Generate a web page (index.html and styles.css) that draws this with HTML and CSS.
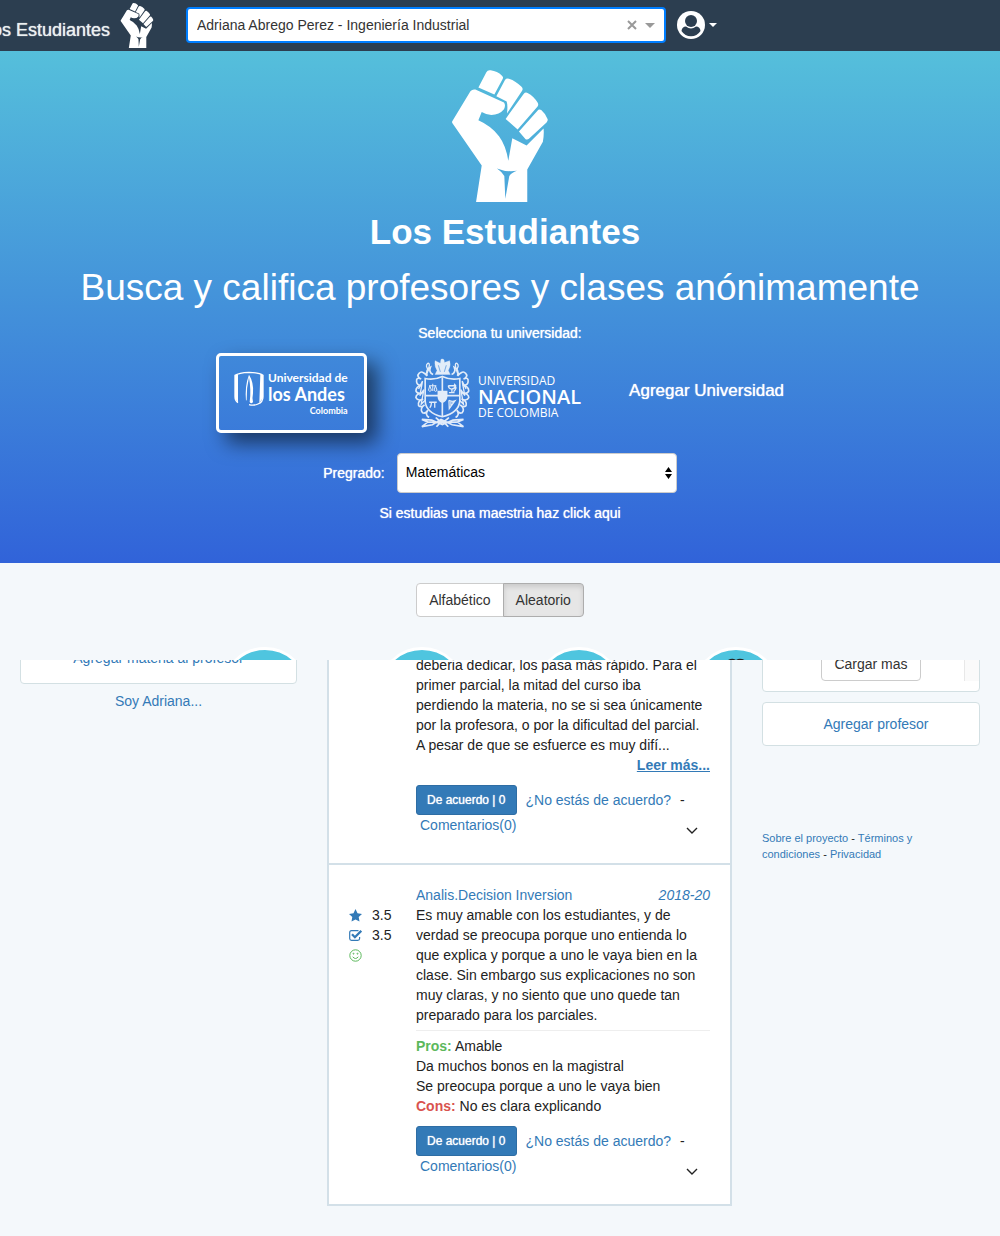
FILE: index.html
```html
<!DOCTYPE html>
<html lang="es">
<head>
<meta charset="utf-8">
<meta name="viewport" content="width=device-width, initial-scale=1">
<title>Los Estudiantes</title>
<link rel="stylesheet" href="styles.css">
</head>
<body>
<svg class="defs" aria-hidden="true">
  <symbol id="fist" viewBox="66 29 288 397">
    <path d="M145 82L169 36Q173 28 182 30Q202 33 216 46Q221 50 218 56L193 103Z"/>
    <path d="M199 108L225 59Q229 53 237 55Q258 62 274 79Q281 85 276 92L231 160Q234 135 230 124Z"/>
    <path d="M227 176L281 101Q286 95 293 98Q312 108 323 127Q327 133 323 139L263 208Z"/>
    <path d="M267 214L322 152Q327 145 334 149Q348 161 353 176Q355 181 350 187L297 236Q292 240 287 237Z"/>
    <path fill-rule="evenodd" d="M66 184L121 93Q127 86 136 88L222 127Q228 135 222 147Q208 164 184 164Q168 163 155 155L145 180Q185 198 207 228Q228 256 235 302L247 234L290 256L341 205Q343 222 339 245L292 328V426H138L155 316L66 188ZM201 325Q230 337 261 332Q245 337 238 348L226 416L223 348Q216 335 201 325Z"/>
  </symbol>
  <symbol id="chevron" viewBox="0 0 12 8"><path d="M1 1L6 6L11 1" fill="none" stroke="#222" stroke-width="1.4"/></symbol>
</svg>

<header class="topbar">
  <a class="brand" href="#"><span>Los Estudiantes</span><svg class="brand-fist"><use href="#fist"/></svg></a>
  <div class="search">
    <input class="search-input" type="text" aria-label="Buscar profesor" value="Adriana Abrego Perez - Ingeniería Industrial">
    <button class="search-btn" type="button" aria-label="Borrar"><svg width="10" height="10" viewBox="0 0 10 10"><path d="M1 1L9 9M9 1L1 9" stroke="#999" stroke-width="2"/></svg></button>
    <button class="search-btn" type="button" aria-label="Abrir"><svg width="10" height="5" viewBox="0 0 10 5"><path d="M0 0H10L5 5Z" fill="#999"/></svg></button>
  </div>
  <button class="user" type="button" aria-label="Usuario">
    <svg width="28" height="28" viewBox="0 0 28 28"><circle cx="14" cy="14" r="14" fill="#fff"/><circle cx="14" cy="10" r="6" fill="#2c3e50"/><path d="M4.500 20Q5 15.500 9 15.500Q14 19.500 19 15.500Q23 15.500 23.500 20Q20 25.300 14 25.300Q8 25.300 4.500 20Z" fill="#2c3e50"/></svg>
    <svg width="8" height="4" viewBox="0 0 8 4"><path d="M0 0H8L4 4Z" fill="#fff"/></svg>
  </button>
</header>

<section class="hero">
  <svg class="hero-fist"><use href="#fist"/></svg>
  <h1 class="hero-title">Los Estudiantes</h1>
  <h2 class="hero-sub">Busca y califica profesores y clases anónimamente</h2>
  <p class="hero-line">Selecciona tu universidad:</p>
  <div class="unis">
    <a class="andes" href="#">
      <svg width="30" height="36" viewBox="0 0 90 106"><path d="M12 94Q3 88 3 76V12Q14 4 45 3Q76 4 87 12V76Q87 92 72 98Q60 104 45 100" fill="none" stroke="#fff" stroke-width="4"/><path d="M3 12L12 8V94L3 80ZM79 8L87 12V80L76 94Z" fill="#fff"/><path d="M36 88Q32 44 45 10Q60 34 57 66Q54 80 57 92Q52 100 47 92Q52 60 45 18Q37 50 38 86Z" fill="#fff"/></svg>
      <span class="andes-text"><span class="andes-top">Universidad de</span><span class="andes-main">los Andes</span><span class="andes-country">Colombia</span></span>
    </a>
    <a class="nacional" href="#">
      <svg width="55" height="70" viewBox="48 38 165 212" fill="none" stroke="#fff" stroke-width="5" opacity=".85">
        <path d="M78 100Q104 106 130 94Q156 106 183 100V168Q180 204 130 216Q80 204 78 168Z"/>
        <path d="M130 96V215M78 152H183"/>
        <path d="M118 140H143V156Q141 168 130 172Q119 168 118 156Z" fill="#fff"/>
        <path d="M126 42Q137 38 136 52L152 46Q157 62 148 76L154 88H108L114 76Q105 62 108 46L124 54Z" fill="#fff" stroke-width="1"/>
        <path d="M118 60L124 80M142 60L136 80" stroke="#458bdb" stroke-width="2"/>
        <path d="M90 122H112M101 116V138M88 136Q92 142 97 136L92 122ZM105 136Q110 142 114 136L109 122Z" stroke-width="3"/>
        <path d="M148 122H170Q168 131 158 132Q149 131 148 122M159 132V142M150 143H167M166 116Q177 128 164 140" stroke-width="4"/>
        <path d="M90 172H113M97 173Q97 184 92 189M107 173V189" stroke-width="4"/>
        <path d="M150 166L151 191L168 168Q160 171 150 166M156 170V184M162 170V176" stroke-width="4"/>
        <path d="M102 88Q88 82 94 66Q78 74 84 92Q68 74 60 84Q50 94 66 102Q50 94 52 110Q54 122 68 120Q50 124 50 138Q54 148 70 144Q50 146 50 158Q56 170 72 162Q54 168 58 182Q66 190 76 180Q60 192 70 204Q80 208 86 196Q76 210 90 218"/>
        <path d="M158 88Q172 82 166 66Q182 74 176 92Q192 74 200 84Q210 94 194 102Q210 94 208 110Q206 122 192 120Q210 124 210 138Q206 148 190 144Q210 146 210 158Q204 170 188 162Q206 168 202 182Q194 190 184 180Q200 192 190 204Q180 208 174 196Q184 210 170 218"/>
        <path d="M84 84Q96 52 86 54Q76 62 90 76M176 84Q164 52 174 54Q184 62 170 76M58 132L70 108L62 152L74 134L66 178L78 166M202 132L190 108L198 152L186 134L194 178L182 166" stroke-width="4"/>
        <path d="M68 224L86 232L68 246L100 240L126 224L160 240L194 246L176 232L194 224L162 226L130 240L98 226ZM86 232H174M110 218Q130 240 150 218M112 246Q130 222 148 246"/>
      </svg>
      <span class="nacional-text"><span class="nac-small">UNIVERSIDAD</span><span class="nac-main">NACIONAL</span><span class="nac-small">DE COLOMBIA</span></span>
    </a>
    <a class="add-uni" href="#">Agregar Universidad</a>
  </div>
  <div class="program">
    <label for="pregrado">Pregrado:</label>
    <span class="select-wrap">
      <select id="pregrado"><option>Matemáticas</option></select>
      <svg width="7" height="12" viewBox="0 0 7 12"><path d="M3.500 0L7 5H0ZM3.500 12L7 7H0Z"/></svg>
    </span>
  </div>
  <a class="hero-line" href="#">Si estudias una maestria haz click aqui</a>
</section>

<div class="sort">
  <button type="button" class="sort-btn">Alfabético</button><button type="button" class="sort-btn active" aria-pressed="true">Aleatorio</button>
</div>
<div class="avatars">
  <span class="avatar"></span><span class="avatar"></span><span class="avatar"></span>
  <span class="avatar"><svg width="28" height="20" viewBox="0 0 28 20"><path d="M2 6Q6 0 12 1L14 2L16 1Q23 0 26 6V20H2Z" fill="#222"/></svg></span>
</div>

<main class="content">
  <aside class="left">
    <div class="card subject"><a href="#">Agregar materia al profesor</a></div>
    <a class="claim" href="#">Soy Adriana...</a>
  </aside>

  <div class="reviews">
    <article class="review continued">
      <div class="scores"></div>
      <div class="body">
        <p>deberia dedicar, los pasa más rápido. Para el<br>primer parcial, la mitad del curso iba<br>perdiendo la materia, no se si sea únicamente<br>por la profesora, o por la dificultad del parcial.<br>A pesar de que se esfuerce es muy difí...</p>
        <a class="more" href="#">Leer más...</a>
        <div class="actions"><button type="button" class="agree">De acuerdo | 0</button><a href="#">¿No estás de acuerdo?</a><span>-</span></div>
        <div class="comments"><a href="#">Comentarios(0)</a><button type="button" class="expand" aria-label="Ver comentarios"><svg width="12" height="8"><use href="#chevron"/></svg></button></div>
      </div>
    </article>
    <article class="review">
      <div class="scores">
        <div class="score"><svg width="13" height="13" viewBox="0 0 13 13"><path d="M6.500 0L8.500 4.300L13 4.900L9.700 8L10.500 12.600L6.500 10.400L2.500 12.600L3.300 8L0 4.900L4.500 4.300Z" fill="#337ab7"/></svg>3.5</div>
        <div class="score"><svg width="13" height="13" viewBox="0 0 13 13" fill="none" stroke="#337ab7"><path d="M9.500 1.600H2.500Q.7 1.600 .7 3.400V9.600Q.7 11.400 2.500 11.400H8.800Q10.600 11.400 10.600 9.600V8" stroke-width="1.200"/><path d="M3 5.300L5.900 8.200L12.300 1.800" stroke-width="2.300"/></svg>3.5</div>
        <div class="score"><svg width="13" height="13" viewBox="0 0 13 13" fill="none" stroke="#5cb85c"><circle cx="6.500" cy="6.500" r="5.700"/><path d="M3.700 7.800Q6.500 11.200 9.300 7.800"/><circle cx="4.500" cy="4.700" r=".5"/><circle cx="8.500" cy="4.700" r=".5"/></svg></div>
      </div>
      <div class="body">
        <div class="review-head"><a href="#">Analis.Decision Inversion</a><a href="#"><em>2018-20</em></a></div>
        <p>Es muy amable con los estudiantes, y de<br>verdad se preocupa porque uno entienda lo<br>que explica y porque a uno le vaya bien en la<br>clase. Sin embargo sus explicaciones no son<br>muy claras, y no siento que uno quede tan<br>preparado para los parciales.</p>
        <p class="proscons"><strong class="pros">Pros:</strong> Amable<br>Da muchos bonos en la magistral<br>Se preocupa porque a uno le vaya bien<br><strong class="cons">Cons:</strong> No es clara explicando</p>
        <div class="actions"><button type="button" class="agree">De acuerdo | 0</button><a href="#">¿No estás de acuerdo?</a><span>-</span></div>
        <div class="comments"><a href="#">Comentarios(0)</a><button type="button" class="expand" aria-label="Ver comentarios"><svg width="12" height="8"><use href="#chevron"/></svg></button></div>
      </div>
    </article>
  </div>

  <aside class="right">
    <div class="card load"><button type="button" class="load-btn">Cargar más</button><span class="track"></span></div>
    <div class="card add-prof"><a href="#">Agregar profesor</a></div>
    <footer class="legal"><a href="#">Sobre el proyecto</a> - <a href="#">Términos y<br>condiciones</a> - <a href="#">Privacidad</a></footer>
  </aside>
</main>
</body>
</html>
```

FILE: styles.css
```css
* { box-sizing: border-box; }
body { margin: 0; background: #f4f8fb; color: #222; font: 14px/20px "Liberation Sans", Arial, sans-serif; overflow-x: hidden; }
a { color: #337ab7; text-decoration: none; }
p, h1, h2 { margin: 0; }
button, input, select { font: inherit; color: inherit; }
button { cursor: pointer; }
svg { flex: none; }
.defs { display: none; }

/* Top bar */
.topbar { display: flex; align-items: center; height: 51px; padding-bottom: 1px; background: #2c3e50; }
.brand { display: flex; flex: none; justify-content: flex-end; align-items: center; gap: 10px; width: 154px; color: #ecf0f1; font-size: 18px; white-space: nowrap; text-shadow: 0 0 1px #ecf0f1; }
.brand span { padding-top: 10px; }
.brand-fist { width: 34px; height: 45px; fill: #fff; }
.search { display: flex; flex: 0 1 480px; align-items: center; height: 36px; margin: 0 11px 0 32px; padding-right: 5px; border: 2px solid #007eff; border-radius: 4px; background: #fff; }
.search-input { flex: 1; min-width: 0; padding: 0 9px; border: 0; outline: 0; background: none; color: #333; }
.search-btn { display: flex; justify-content: center; width: 18px; padding: 0; border: 0; background: none; }
.user { display: flex; align-items: center; gap: 4px; padding: 0; border: 0; background: none; }

/* Hero */
.hero { display: flex; flex-direction: column; align-items: center; padding: 19px 20px 40px; background: linear-gradient(#55bfdb, #3163d9); color: #fff; }
.hero-fist { width: 96px; height: 132px; fill: #fff; }
.hero-title { padding-left: 10px; margin-top: 10px; font-size: 35px; line-height: 40px; }
.hero-sub { margin-top: 16px; font-size: 37px; line-height: 40px; font-weight: 400; text-align: center; }
.hero-line { margin-top: 15px; color: #fff; text-shadow: 0 0 1px #fff; }
.unis { display: flex; align-items: center; gap: 48px; margin: 10px 0 20px; }
.unis a { color: #fff; }
.andes { display: flex; gap: 4px; width: 151px; height: 80px; padding: 15px; border: 3px solid #fff; border-radius: 5px; box-shadow: 10px 10px 20px rgba(0, 0, 0, .55); font-family: Lato, sans-serif; font-weight: 700; white-space: nowrap; }
.andes-text, .nacional-text { display: flex; flex-direction: column; }
.andes-top { font-size: 12px; line-height: 14px; }
.andes-main { font-size: 18px; line-height: 18px; }
.andes-country { align-self: flex-end; font-size: 9px; line-height: 16px; }
.nacional { display: flex; align-items: center; gap: 8px; font-family: "Open Sans", sans-serif; }
.nac-small { font-size: 12px; line-height: 16px; }
.nac-main { font-size: 20px; line-height: 16px; font-weight: 600; }
.nacional-text { padding-top: 8px; }
.add-uni { padding-bottom: 4px; font-size: 17px; text-shadow: 0 0 1px #fff; }
.program { display: flex; align-items: center; gap: 12px; }
.program label { text-shadow: 0 0 1px #fff; }
.program + .hero-line { margin-top: 10px; }
.select-wrap { display: grid; align-items: center; width: 280px; }
.select-wrap > * { grid-area: 1 / 1; }
.select-wrap svg { justify-self: end; margin-right: 5px; pointer-events: none; }
.select-wrap select { appearance: none; height: 40px; padding: 0 8px 2px; border: 1px solid #ccc; border-radius: 4px; background: #fff; color: #000; }

/* Sorting and avatars */
.sort { display: flex; justify-content: center; padding-top: 20px; }
.sort-btn { height: 34px; padding: 0 12px; border: 1px solid #ccc; border-radius: 4px 0 0 4px; background: #fff; color: #333; }
.sort-btn.active { margin-left: -1px; border-color: #adadad; border-radius: 0 4px 4px 0; background: #e6e6e6; box-shadow: inset 0 3px 5px rgba(0, 0, 0, .12); }
.avatars { display: flex; justify-content: center; gap: 69px; height: 43px; padding-top: 30px; overflow: hidden; }
.avatar { display: flex; flex: none; justify-content: center; width: 88px; height: 88px; padding-top: 8px; border: 3px solid #fff; border-radius: 50%; background: #4fc5df; }

/* Three columns, scrolled under the avatars */
.content { display: grid; grid-template-columns: 277fr 405fr 218fr; gap: 30px; align-items: start; padding: 0 20px 30px; overflow: hidden; }
.card { border: 1px solid #d3e0e3; border-radius: 4px; background: #fff; text-align: center; }
.subject { margin-top: -28px; padding: 15px; }
.claim { display: block; margin-top: 7px; text-align: center; }
.reviews { margin-top: -27px; border: 2px solid #d3e0e8; background: #fff; }
.review { display: grid; grid-template-columns: 67px 1fr; padding: 20px 20px 28px; }
.review + .review { border-top: 2px solid #d3e0e8; }
.body { min-width: 0; }
.scores { padding-top: 20px; }
.score { display: flex; align-items: center; gap: 10px; height: 20px; }
.more { display: block; text-align: right; font-weight: 700; text-decoration: underline; }
.actions { display: flex; align-items: center; gap: 9px; margin-top: 10px; padding-bottom: 1px; line-height: 18px; white-space: nowrap; }
.agree { height: 30px; margin-bottom: -1px; padding: 0 10px; border: 1px solid #2e6da4; border-radius: 3px; background: #337ab7; color: #fff; font-size: 12px; text-shadow: 0 0 1px #fff; }
.comments { display: flex; justify-content: space-between; height: 20px; padding: 0 12px 0 4px; }
.expand { align-self: flex-end; display: flex; padding: 0; border: 0; background: none; }
.review-head { display: flex; justify-content: space-between; }
.proscons { margin-top: 5px; padding-top: 5px; border-top: 1px solid #eee; }
.pros { color: #5cb85c; }
.cons { color: #d9534f; }
.load { display: grid; margin-top: -25px; padding-bottom: 10px; }
.load > * { grid-area: 1 / 1; }
.load-btn { justify-self: center; align-self: end; height: 34px; padding: 0 12px; border: 1px solid #ccc; border-radius: 4px; background: #fff; color: #333; }
.track { justify-self: end; width: 15px; height: 45px; border-left: 1px solid #e8e8e8; background: #fafafa; }
.add-prof { margin-top: 10px; padding: 11px 5px 11px 15px; }
.legal { margin-top: 84px; font-size: 11px; line-height: 16px; }
```
